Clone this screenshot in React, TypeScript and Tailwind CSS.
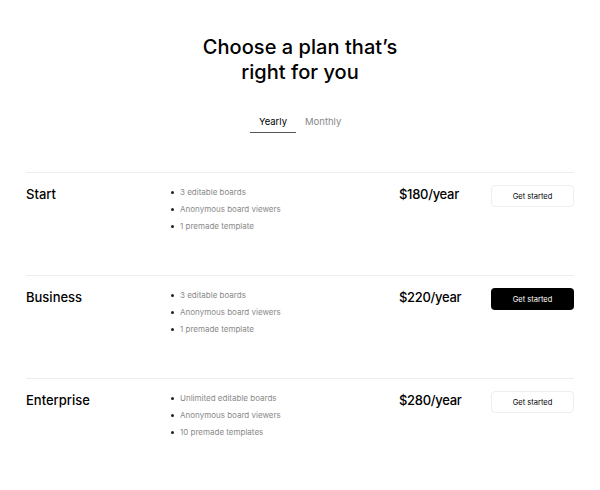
import React from "react";

const plans = [
  { name: "Start", features: ["3 editable boards", "Anonymous board viewers", "1 premade template"], price: "$180/year", dark: false },
  { name: "Business", features: ["3 editable boards", "Anonymous board viewers", "1 premade template"], price: "$220/year", dark: true },
  { name: "Enterprise", features: ["Unlimited editable boards", "Anonymous board viewers", "10 premade templates"], price: "$280/year", dark: false },
];

export default function App() {
  return (
    <div className="w-[600px] h-[490px] bg-white text-black" style={{ fontFamily: "Inter, 'Noto Sans', sans-serif" }}>
      <div className="pt-[35px] text-center">
        <h1 className="text-[20px] leading-[25px] font-medium tracking-[0.05px]">
          Choose a plan that’s
          <br />
          right for you
        </h1>
      </div>
      <div className="mt-[29px] flex justify-center text-[9.5px]">
        <div className="w-[46px] border-b border-[#555] pb-[3px] pt-[1px] text-center text-black">Yearly</div>
        <div className="ml-[9px] w-[45px] pb-[3px] pt-[1px] text-left text-[#888]">Monthly</div>
      </div>
      <div className="mx-[26px] mt-[39px]">
        {plans.map((p) => (
          <div key={p.name} className="grid h-[103px] grid-cols-[145px_228px_92px_83px] border-t border-[#eeeeee] pt-[12px]">
            <div className="text-[13px] font-medium leading-[18px]">{p.name}</div>
            <ul className="flex flex-col gap-[4px] pt-[1px] text-[8px] leading-[13px] text-[#8a8a8a]">
              {p.features.map((f) => (
                <li key={f} className="flex items-center gap-[6px]">
                  <span className="h-[3px] w-[3px] rounded-full bg-[#222]" />
                  {f}
                </li>
              ))}
            </ul>
            <div className="text-[13px] font-medium leading-[18px] tracking-[-0.3px]">{p.price}</div>
            <div className="flex items-start">
              <button
                className={
                  p.dark
                    ? "h-[22px] w-[83px] rounded-[4px] bg-black text-[7.5px] text-white"
                    : "h-[22px] w-[83px] rounded-[4px] border border-[#eeeeee] bg-white text-[7.5px] text-black"
                }
              >
                Get started
              </button>
            </div>
          </div>
        ))}
      </div>
    </div>
  );
}
